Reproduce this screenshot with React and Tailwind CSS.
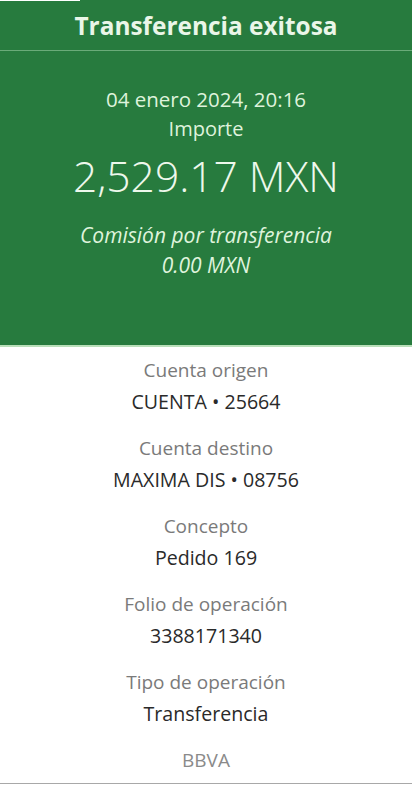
import React from 'react';

const details = [
  { label: 'Cuenta origen', value: 'CUENTA • 25664' },
  { label: 'Cuenta destino', value: 'MAXIMA DIS • 08756' },
  { label: 'Concepto', value: 'Pedido 169' },
  { label: 'Folio de operación', value: '3388171340' },
  { label: 'Tipo de operación', value: 'Transferencia' },
];

const App = () => {
  return (
    <div className="relative w-[412px] h-[785px] bg-white overflow-hidden" style={{ fontFamily: '"Open Sans", "Noto Sans", sans-serif' }}>
      {/* small white strip at top-left */}
      <div className="absolute left-0 top-0 w-[80px] h-[1px] bg-white" />

      <div className="bg-[#277b3e] h-[345px] flex flex-col">
        <div className="h-[51px] flex items-center justify-center pt-[3px] border-b border-[#6aab79]">
          <h1 className="text-[24.4px] font-bold text-[#eaf6e8]">Transferencia exitosa</h1>
        </div>
        <div className="flex flex-col items-center pt-[33px] text-[#dff3dc]">
          <p className="text-[20.5px] leading-[30px]">04 enero 2024, 20:16</p>
          <p className="text-[20px] leading-[30px]">Importe</p>
          <p className="mt-[5px] text-[42.5px] font-light leading-[54px] text-[#eef8ec]">2,529.17 MXN</p>
          <p className="mt-[17px] text-[21px] italic leading-[30px]">Comisión por transferencia</p>
          <p className="text-[21px] italic leading-[30px]">0.00 MXN</p>
        </div>
      </div>
      <div className="h-[2px] bg-[#b9dfb9]" />

      <div className="flex flex-col items-center pt-[8px]">
        {details.map((d) => (
          <div key={d.label} className="flex flex-col items-center mb-[16px]">
            <p className="text-[19px] leading-[31px] text-[#7a7a7a]">{d.label}</p>
            <p className="text-[19.6px] leading-[31px] text-[#2a2a2a]">{d.value}</p>
          </div>
        ))}
        <p className="text-[19px] leading-[31px] text-[#8a8a8a]">BBVA</p>
      </div>
      <div className="absolute left-0 right-0 top-[783px] h-[1px] bg-[#a8a8a8]" />
    </div>
  );
};

export default App;
